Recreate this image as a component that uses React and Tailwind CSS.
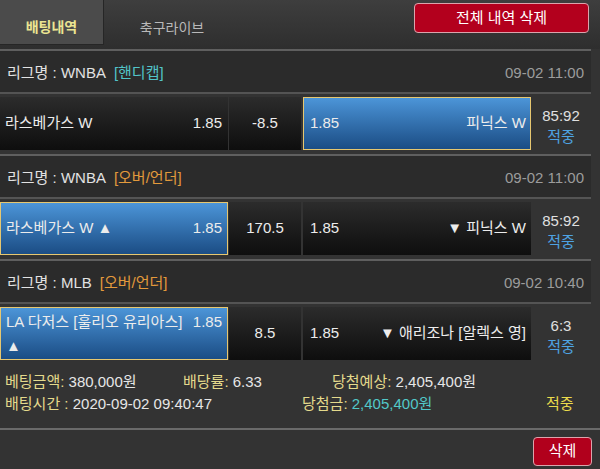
import React from "react";

const FONT = { fontFamily: '"Liberation Sans", "Noto Sans CJK KR", sans-serif' };

function Cell({ selected, children, className = "" }) {
  const base = selected
    ? "bg-gradient-to-b from-[#4c95d8] to-[#1b4d85] border border-[#e6c770]"
    : "bg-gradient-to-b from-[#2c2c2c] to-[#0e0e0e]";
  return <div className={`${base} h-[53px] text-[15px] text-[#ececec] ${className}`}>{children}</div>;
}

function League({ name, tag, tagColor, date }) {
  return (
    <>
      <div className="h-[2px] bg-[#5f5f5f]" />
      <div className="h-[41px] pt-[3px] bg-[#2b2b2b] flex items-center justify-between px-[7px] text-[15px]">
        <div className="text-[#e2e2e2]">
          리그명 : {name}<span className={`${tagColor} ml-[8px]`}>{tag}</span>
        </div>
        <div className="text-[#9c9c9c]">{date}</div>
      </div>
      <div className="h-[2px] bg-[#545454]" />
    </>
  );
}

function Score({ score }) {
  return (
    <div className="flex-1 flex flex-col items-center justify-center text-[15px] leading-[21px]">
      <div className="text-[#e0e0e0]">{score}</div>
      <div className="text-[#4ea2e2]">적중</div>
    </div>
  );
}

export default function App() {
  return (
    <div className="w-[600px] h-[469px] bg-[#333333] overflow-hidden" style={FONT}>
      {/* header */}
      <div className="h-[49px] flex bg-gradient-to-b from-[#3e3e3e] to-[#2e2e2e]">
        <div className="w-[104px] h-[45px] pt-[11px] bg-[#4b4b4b] border-r border-b border-[#262626] flex items-center justify-center text-[14px] font-bold text-[#ebe592]">
          배팅내역
        </div>
        <div className="w-[136px] h-[45px] pt-[11px] flex items-center justify-center text-[14px] text-[#b9b9b9]">
          축구라이브
        </div>
        <div className="flex-1" />
        <div className="mt-[3px] mr-[11px] w-[175px] h-[30px] bg-[#b3001d] border border-[#dba4ac] rounded-[4px] flex items-center justify-center text-[15px] text-white">
          전체 내역 삭제
        </div>
      </div>

      <div className="w-[591px]">
        {/* section 1 */}
        <League name="WNBA" tag="[핸디캡]" tagColor="text-[#52c4c8]" date="09-02 11:00" />
        <div className="h-[60px] pt-[3px] flex">
          <Cell className="w-[228px] flex items-center justify-between pl-[5px] pr-[6px]">
            <span>라스베가스 W</span>
            <span>1.85</span>
          </Cell>
          <div className="w-[1px]" />
          <Cell className="w-[72px] flex items-center justify-center">-8.5</Cell>
          <div className="w-[2px]" />
          <Cell selected className="w-[228px] flex items-center justify-between pl-[6px] pr-[4px]">
            <span>1.85</span>
            <span>피닉스 W</span>
          </Cell>
          <Score score="85:92" />
        </div>

        {/* section 2 */}
        <League name="WNBA" tag="[오버/언더]" tagColor="text-[#e39a3c]" date="09-02 11:00" />
        <div className="h-[60px] pt-[3px] flex">
          <Cell selected className="w-[228px] flex items-center justify-between pl-[5px] pr-[5px]">
            <span>라스베가스 W ▲</span>
            <span>1.85</span>
          </Cell>
          <div className="w-[1px]" />
          <Cell className="w-[72px] flex items-center justify-center">170.5</Cell>
          <div className="w-[2px]" />
          <Cell className="w-[228px] flex items-center justify-between pl-[7px] pr-[5px]">
            <span>1.85</span>
            <span>▼ 피닉스 W</span>
          </Cell>
          <Score score="85:92" />
        </div>

        {/* section 3 */}
        <League name="MLB" tag="[오버/언더]" tagColor="text-[#e39a3c]" date="09-02 10:40" />
        <div className="h-[60px] pt-[3px] flex">
          <Cell selected className="w-[228px] flex flex-col justify-center pl-[5px] pr-[5px] leading-[24px]">
            <div className="flex justify-between">
              <span>LA 다저스 [훌리오 유리아스]</span>
              <span>1.85</span>
            </div>
            <div>▲</div>
          </Cell>
          <div className="w-[1px]" />
          <Cell className="w-[72px] flex items-center justify-center">8.5</Cell>
          <div className="w-[2px]" />
          <Cell className="w-[228px] flex items-center justify-between pl-[7px] pr-[5px]">
            <span>1.85</span>
            <span>▼ 애리조나 [알렉스 영]</span>
          </Cell>
          <Score score="6:3" />
        </div>
      </div>

      {/* info */}
      <div className="h-[64px] pt-[7px] text-[15px] leading-[22px] text-[#e6e6e6]">
        <div className="flex pl-[5px]">
          <div className="w-[178px]">
            <span className="text-[#e4da8c]">베팅금액:</span> 380,000원
          </div>
          <div className="w-[149px]">
            <span className="text-[#e4da8c]">배당률:</span> 6.33
          </div>
          <div>
            <span className="text-[#e4da8c]">당첨예상:</span> 2,405,400원
          </div>
        </div>
        <div className="flex pl-[5px]">
          <div className="w-[297px]">
            <span className="text-[#e4da8c]">배팅시간 :</span> 2020-09-02 09:40:47
          </div>
          <div className="w-[244px]">
            <span className="text-[#e4da8c]">당첨금:</span>{" "}
            <span className="text-[#52c8c8]">2,405,400원</span>
          </div>
          <div className="text-[#eadb4c]">적중</div>
        </div>
      </div>
      <div className="h-[2px] bg-[#6a6a6a]" />
      <div className="flex justify-end pt-[7px] pr-[8px]">
        <div className="w-[59px] h-[29px] bg-[#b1001c] border border-[#dba4ac] rounded-[4px] flex items-center justify-center text-[15px] text-white">
          삭제
        </div>
      </div>
    </div>
  );
}
